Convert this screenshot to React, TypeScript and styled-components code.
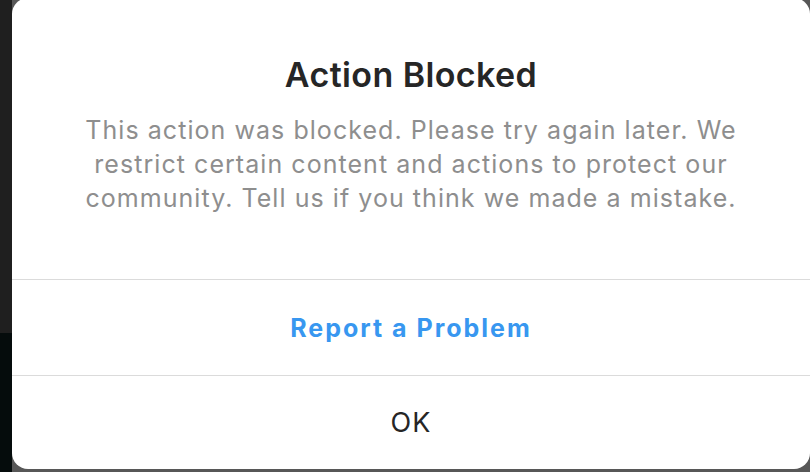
import React from "react";
import styled, { createGlobalStyle } from "styled-components";

const GlobalStyle = createGlobalStyle`
  html, body {
    margin: 0;
    padding: 0;
    background: #555555;
  }
  * {
    box-sizing: border-box;
  }
`;

const Page = styled.div`
  display: flex;
  width: 810px;
  height: 472px;
  overflow: hidden;
  font-family: Inter, "Liberation Sans", sans-serif;
`;

const Sidebar = styled.div`
  display: flex;
  flex-direction: column;
  width: 12px;
  flex-shrink: 0;
`;

const SidebarPart = styled.div<{ $color: string; $height?: number }>`
  background: ${(p) => p.$color};
  height: ${(p) => (p.$height ? `${p.$height}px` : "auto")};
  flex: ${(p) => (p.$height ? "none" : "1")};
`;

const Stage = styled.div`
  flex: 1;
  background: #575757;
  padding-bottom: 3px;
  display: flex;
  flex-direction: column;
`;

const Dialog = styled.div`
  margin-top: -2px;
  flex: 1;
  background: #ffffff;
  border-radius: 16px;
  display: flex;
  flex-direction: column;
  overflow: hidden;
`;

const Header = styled.div`
  height: 281px;
  flex-shrink: 0;
  padding-top: 57px;
  text-align: center;
`;

const Title = styled.h2`
  margin: 0;
  font-size: 34px;
  line-height: 40px;
  letter-spacing: 0.4px;
  font-weight: 600;
  color: #262626;
`;

const Message = styled.p`
  margin: 18px 0 0;
  font-size: 25px;
  line-height: 34px;
  letter-spacing: 1.05px;
  font-weight: 400;
  color: #8e8e8e;
`;

const Action = styled.button<{ $primary?: boolean; $height: number }>`
  height: ${(p) => p.$height}px;
  flex-shrink: 0;
  border: none;
  border-top: 1px solid #dbdbdb;
  background: transparent;
  font-family: inherit;
  font-size: ${(p) => (p.$primary ? "25px" : "27px")};
  letter-spacing: ${(p) => (p.$primary ? "2px" : "1px")};
  font-weight: ${(p) => (p.$primary ? 700 : 400)};
  color: ${(p) => (p.$primary ? "#3897f0" : "#262626")};
  display: flex;
  align-items: center;
  justify-content: center;
  padding: 0;
  cursor: pointer;
`;

export default function App() {
  return (
    <>
      <GlobalStyle />
      <Page>
        <Sidebar>
          <SidebarPart $color="#1f1f1f" $height={333} />
          <SidebarPart $color="#050c0c" />
        </Sidebar>
        <Stage>
          <Dialog>
            <Header>
              <Title>Action Blocked</Title>
              <Message>
                This action was blocked. Please try again later. We
                <br />
                restrict certain content and actions to protect our
                <br />
                community. Tell us if you think we made a mistake.
              </Message>
            </Header>
            <Action $primary $height={96}>
              Report a Problem
            </Action>
            <Action $height={94}>OK</Action>
          </Dialog>
        </Stage>
      </Page>
    </>
  );
}
